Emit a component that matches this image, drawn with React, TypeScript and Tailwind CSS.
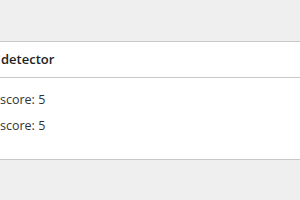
import React from 'react';

const rows = [
  { prefix: 'Toxicity ', label: 'score', value: 5 },
  { prefix: 'Sentiment ', label: 'score', value: 5 },
];

function Clipped({ prefix, children }: { prefix: string; children: React.ReactNode }) {
  return (
    <span className="flex whitespace-pre">
      <span className="w-0 flex justify-end">{prefix}</span>
      {children}
    </span>
  );
}

export default function App() {
  return (
    <div className="w-[300px] h-[200px] overflow-hidden bg-[#efefef] pt-[41px] font-['Open_Sans',sans-serif] text-[#333]">
      <div className="w-[320px] bg-white border-y border-[#c8c8c8]">
        {/* Header */}
        <div className="h-[36px] flex items-center pl-[1px] border-b border-[#c8c8c8]">
          <span className="text-[13px] font-semibold text-[#222]">
            <Clipped prefix="Language ">detector</Clipped>
          </span>
        </div>
        {/* Body */}
        <div className="h-[81px] pt-[13px] flex flex-col gap-[8px]">
          {rows.map((r) => (
            <div key={r.prefix} className="text-[12.5px] leading-[18px]">
              <Clipped prefix={r.prefix}>
                {r.label}: {r.value}
              </Clipped>
            </div>
          ))}
        </div>
      </div>
    </div>
  );
}
